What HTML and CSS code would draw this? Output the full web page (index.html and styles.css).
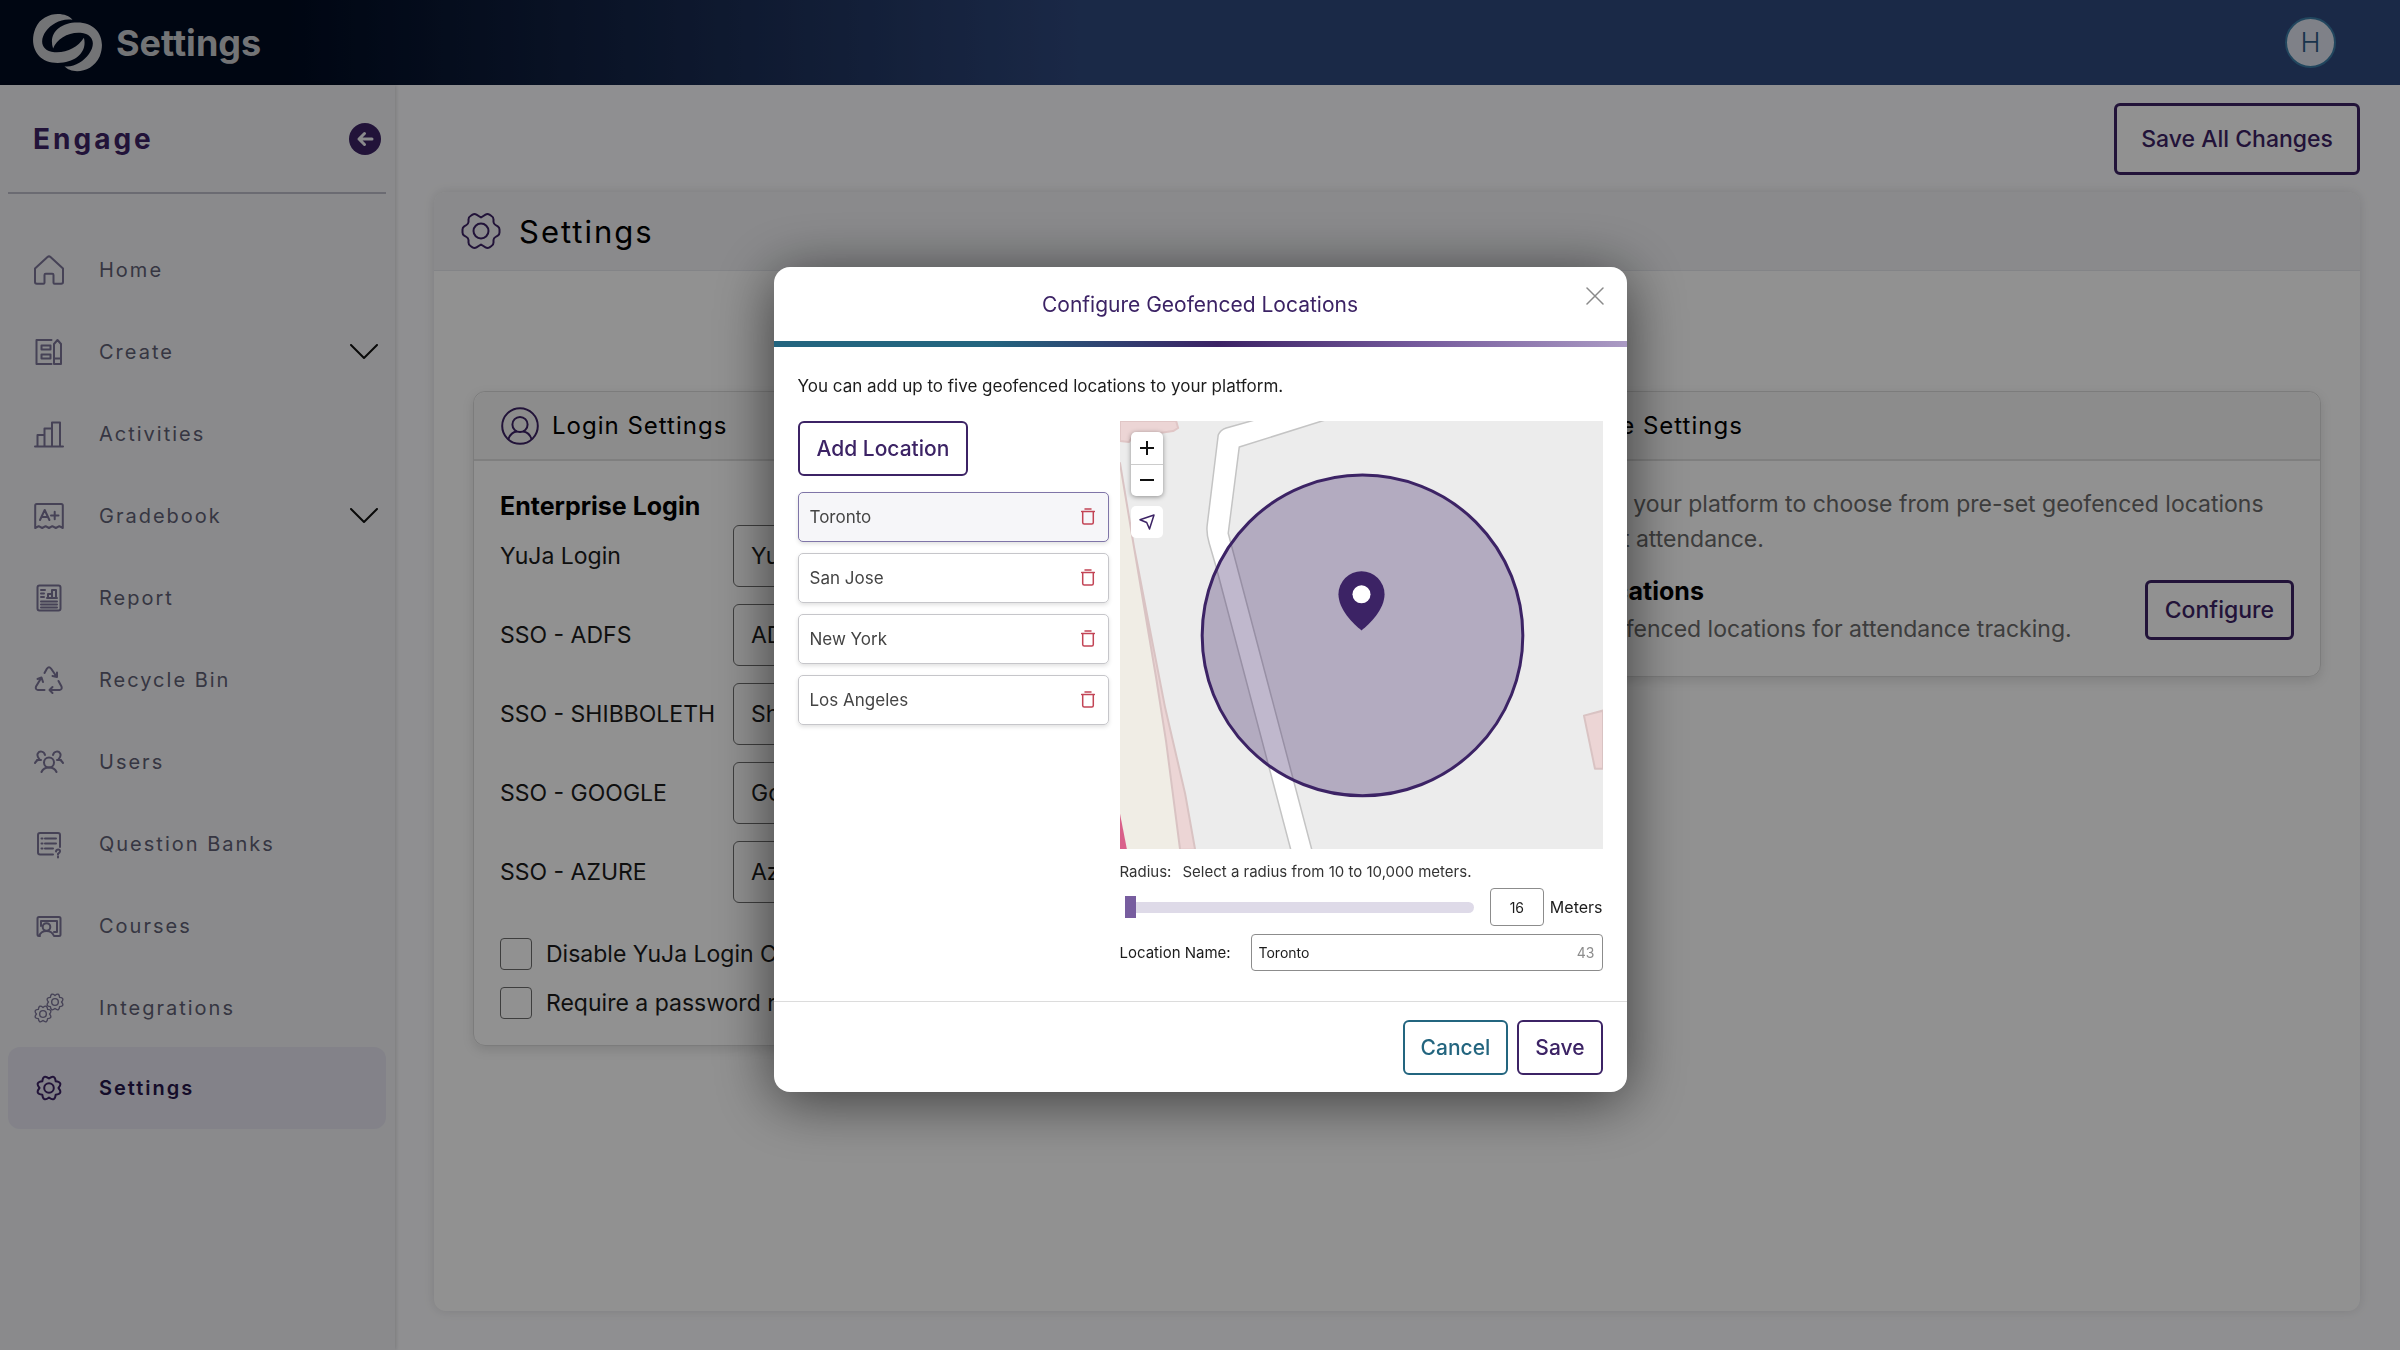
FILE: index.html
```html
<!DOCTYPE html>
<html lang="en">
<head>
  <meta charset="UTF-8">
  <meta name="viewport" content="width=device-width, initial-scale=1.0">
  <title>Engage - Settings</title>
  <link rel="stylesheet" href="styles.css">
</head>
<body>
  <!-- shared icons -->
  <svg class="sprite" aria-hidden="true">
    <symbol id="cog" viewBox="-13 -13 26 26">
      <path d="M0-9.500Q5.900-14.300 6.700-6.700Q14.300-5.900 9.500 0Q14.300 5.900 6.700 6.700Q5.900 14.300 0 9.500Q-5.900 14.300-6.700 6.700Q-14.300 5.900-9.500 0Q-14.300-5.900-6.700-6.700Q-5.900-14.300 0-9.500Z"/>
      <circle r="4.800"/>
    </symbol>
    <symbol id="person" viewBox="0 0 38 38">
      <circle cx="19" cy="19" r="17.800"/>
      <circle cx="19" cy="17.500" r="7.600"/>
      <path d="M7.500 32C9 27.500 12.500 25 15.500 24.500M30.500 32C29 27.500 25.500 25 22.500 24.500"/>
    </symbol>
    <symbol id="trash" viewBox="0 0 14 17">
      <path d="M.5 3.500h13M4 1h6M1.700 3.500v11q0 1.500 1.500 1.500h7.600q1.500 0 1.500-1.500v-11"/>
    </symbol>
    <symbol id="chevron" viewBox="0 0 28 16">
      <path d="M1 1l13 13L27 1"/>
    </symbol>
  </svg>

  <header class="topbar">
    <a class="brand" href="#">
      <svg class="logo" viewBox="98 34 212 176" aria-hidden="true">
        <path d="M219 54C198 28 130 28 108 80C88 130 112 183 175 183C228 183 264 150 253 108C236 136 200 154 165 151C124 147 120 115 140 88C156 66 185 49 219 54Z"/>
        <path d="M195 193C215 217 278 214 300 164C320 114 296 62 233 62C180 62 146 96 161 140C172 110 208 90 243 93C284 97 288 129 268 156C252 178 223 197 195 193Z"/>
      </svg>
      <span>Settings</span>
    </a>
    <button class="avatar" aria-label="Account">H</button>
  </header>

  <div class="layout">
    <aside class="sidebar">
      <div class="sidebar-head">
        <h2>Engage</h2>
        <button class="collapse" aria-label="Collapse menu">
          <svg viewBox="0 0 32 32"><path d="M23 16H10M15.500 10.500L10 16l5.500 5.500"/></svg>
        </button>
      </div>
      <nav class="menu">
        <a href="#"><svg class="icon" viewBox="0 0 30 30"><path d="M1 13.500L13.500 2q1.500-1.200 3 0L29 13.500V27q0 1.800-1.800 1.800h-6.700q-1 0-1-1V20q0-1.200-1.200-1.200h-6.600q-1.200 0-1.200 1.200v7.800q0 1-1 1H2.800Q1 28.800 1 27z"/></svg><span>Home</span></a>
        <a href="#"><svg class="icon" viewBox="0 0 30 30"><path d="M17.500 3H2.500v24h15M7.500 8.500h9v4h-9zM7.500 17.500h9v4h-9zM20 27V7l3.500-4L27 7v20zM20 21.500h7"/></svg><span>Create</span><svg class="chevron"><use href="#chevron"/></svg></a>
        <a href="#"><svg class="icon" viewBox="0 0 30 30"><path d="M1 27.500h28M3.500 27.500V16h7v11.500M10.500 27.500V9.500H18v18M18 27.500V3.500h8v24"/></svg><span>Activities</span></a>
        <a href="#"><svg class="icon" viewBox="0 0 30 30"><path d="M1.200 27V4.500q0-1.500 1.500-1.500h24.600q1.500 0 1.500 1.500V27l-3.500-1.800-3.500 1.800-3.500-1.800-3.300 1.800-3.400-1.800L8.200 27l-3.500-1.800zM6 19l4.700-10 4.700 10M7.800 16h5.800M17 14.500h7.500M20.700 10.700v7.600"/></svg><span>Gradebook</span><svg class="chevron"><use href="#chevron"/></svg></a>
        <a href="#"><svg class="icon" viewBox="0 0 30 30"><rect x="3.500" y="2.500" width="23" height="25" rx="2"/><path d="M7 7h4M7 10.500h3M7 14h3M7 18.500h16M7 21.500h16M7 24.500h16M13 15h10M14 15v-4h4v4M18 15V7h4v8"/></svg><span>Report</span></a>
        <a href="#"><svg class="icon" viewBox="0 0 30 30"><path d="M10.500 8L13 3.500q2-2.500 4 0l5.500 8M23 7.500v4.500l-4.500-1M24.500 16l3 5.500q1 3-2 3.500H15.500M18.500 22l-3 3 3 3M10.500 25H4q-3-.5-2-3.500L7.500 12.500M3.500 14l4-1.500L9 17"/></svg><span>Recycle Bin</span></a>
        <a href="#"><svg class="icon" viewBox="0 0 30 30"><circle cx="15" cy="15.500" r="5"/><path d="M7.500 25q2-4.500 7.500-4.500t7.500 4.500M1 16q1.500-3 4.500-3.500Q2.500 9 3.800 6.500C5.500 3.500 10 4 11 8M7 13H3M29 16q-1.500-3-4.500-3.500Q27.500 9 26.200 6.500C24.500 3.500 20 4 19 8M23 13h4"/></svg><span>Users</span></a>
        <a href="#"><svg class="icon" viewBox="0 0 30 30"><path d="M19 25.500H6q-2 0-2-2V6q0-2 2-2h18q2 0 2 2v12M11 9.500h11M11 14.500h11M11 19.500h8M7.500 9.500h1M7.500 14.500h1M7.500 19.500h1M22 22.500q.3-2 2.200-2t1.800 2q0 1-2 2.300v.8M24 27.500v1"/></svg><span>Question Banks</span></a>
        <a href="#"><svg class="icon" viewBox="0 0 30 30"><path d="M6 25H5q-1.500 0-1.500-1.500v-16Q3.500 6 5 6h20q1.500 0 1.500 1.500v16Q26.500 25 25 25h-5q-2-5-7.500-5T5 25M7 15v-5h16v11h-3"/><circle cx="12.500" cy="16" r="3.800"/></svg><span>Courses</span></a>
        <a href="#"><svg class="icon" viewBox="0 0 30 30"><use href="#cog" x="12" y="0" width="18" height="18"/><use href="#cog" x="0" y="12" width="18" height="18"/></svg><span>Integrations</span></a>
        <a href="#" class="active" aria-current="page"><svg class="icon" viewBox="0 0 30 30"><use href="#cog" x="2" y="2" width="26" height="26"/></svg><span>Settings</span></a>
      </nav>
    </aside>

    <main class="content">
      <div class="toolbar">
        <button class="btn btn-large">Save All Changes</button>
      </div>

      <section class="panel">
        <div class="panel-head">
          <svg class="panel-icon" viewBox="-20 -20 40 40" aria-hidden="true">
            <path d="M0-13.500L4.500-16.300Q6.500-17.500 8.500-16.300L10.500-15Q12.500-13.800 12.500-11.500V-9Q12.700-7 14.500-6L16.800-4.700Q18.500-3.600 18.500-1.500V1.500Q18.500 3.600 16.800 4.700L14.500 6Q12.700 7 12.500 9V11.500Q12.500 13.800 10.500 15L8.500 16.300Q6.500 17.500 4.500 16.300L0 13.500L-4.500 16.300Q-6.500 17.500-8.500 16.300L-10.500 15Q-12.500 13.800-12.500 11.500V9Q-12.700 7-14.500 6L-16.800 4.700Q-18.500 3.600-18.500 1.500V-1.500Q-18.500-3.600-16.800-4.700L-14.500-6Q-12.700-7-12.500-9V-11.500Q-12.500-13.800-10.500-15L-8.500-16.300Q-6.500-17.500-4.500-16.300Z"/>
            <circle r="7.500"/>
          </svg>
          <h1>Settings</h1>
        </div>

        <div class="cards">
          <section class="card">
            <div class="card-head">
              <svg class="card-icon" aria-hidden="true"><use href="#person"/></svg>
              <h2>Login Settings</h2>
            </div>
            <div class="card-body">
              <h3>Enterprise Login</h3>
              <div class="fields">
                <label for="yuja">YuJa Login</label>
                <input type="text" id="yuja" value="YuJa Login">
                <label for="adfs">SSO - ADFS</label>
                <input type="text" id="adfs" value="ADFS">
                <label for="shib">SSO - SHIBBOLETH</label>
                <input type="text" id="shib" value="Shibboleth">
                <label for="google">SSO - GOOGLE</label>
                <input type="text" id="google" value="Google">
                <label for="azure">SSO - AZURE</label>
                <input type="text" id="azure" value="Azure">
              </div>
              <div class="checks">
                <label><input type="checkbox"> Disable YuJa Login Credentials</label>
                <label><input type="checkbox"> Require a password reset</label>
              </div>
            </div>
          </section>

          <section class="card">
            <div class="card-head">
              <svg class="card-icon" aria-hidden="true"><use href="#person"/></svg>
              <h2>Attendance Settings</h2>
            </div>
            <div class="card-body">
              <p class="muted">Allow users from your platform to choose from pre-set geofenced locations when they report attendance.</p>
              <div class="setting">
                <div>
                  <h4>Geofenced Locations</h4>
                  <p class="muted">Update your geofenced locations for attendance tracking.</p>
                </div>
                <button class="btn">Configure</button>
              </div>
            </div>
          </section>
        </div>
      </section>
    </main>
  </div>

  <div class="overlay">
    <div class="modal" role="dialog" aria-modal="true" aria-labelledby="modalTitle">
      <div class="modal-head">
        <h2 id="modalTitle">Configure Geofenced Locations</h2>
        <button class="close" aria-label="Close">
          <svg viewBox="0 0 18 18"><path d="M1 1l16 16M17 1L1 17"/></svg>
        </button>
      </div>

      <div class="modal-body">
        <p class="intro">You can add up to five geofenced locations to your platform.</p>
        <div class="geo">
          <div class="places">
            <button class="btn btn-modal">Add Location</button>
            <ul>
              <li class="selected"><span>Toronto</span><button aria-label="Delete Toronto"><svg><use href="#trash"/></svg></button></li>
              <li><span>San Jose</span><button aria-label="Delete San Jose"><svg><use href="#trash"/></svg></button></li>
              <li><span>New York</span><button aria-label="Delete New York"><svg><use href="#trash"/></svg></button></li>
              <li><span>Los Angeles</span><button aria-label="Delete Los Angeles"><svg><use href="#trash"/></svg></button></li>
            </ul>
          </div>

          <div class="editor">
            <div class="map">
              <svg class="map-tiles" viewBox="0 0 482 428" role="img" aria-label="Map of Toronto">
                <rect width="482" height="428" fill="#ececec"/>
                <path d="M0 42L14 126 34 248 46 320 61 428H0Z" fill="#f0ede5"/>
                <path d="M0 42L14 126 31 214 45 286 65 372 75 428H60L46 320 36 256 14 126Z" fill="#ecd5d5" stroke="#d9c3c3"/>
                <path d="M0 392L7 428H0Z" fill="#d9608a"/>
                <path d="M0 0H56L58 7 53 10 12 16 9 21 0 20Z" fill="#ecd5d5" stroke="#e0c6c6"/>
                <path d="M482 289L463 294 474 347H482Z" fill="#ecd5d5" stroke="#d9c3c3"/>
                <path d="M138-2L106 7Q100 9 98 14L87 104Q86 112 89 122L96 146 171 430H192L108 112 119 26 208-2Z" fill="#fff" stroke="#c4c4c4" stroke-width="1.500"/>
                <circle cx="242" cy="214" r="160" fill="#3c2365" fill-opacity=".32" stroke="#3c2365" stroke-width="3"/>
                <path d="M241 209C233 203 218 188 218 173A23 23 0 0 1 264 173C264 188 249 203 241 209Z" fill="#3c2365"/>
                <circle cx="241" cy="173" r="9" fill="#fff"/>
              </svg>
              <div class="map-controls">
                <div class="zoom">
                  <button aria-label="Zoom in"><svg viewBox="0 0 14 14"><path d="M7 .5v13M.5 7h13"/></svg></button>
                  <button aria-label="Zoom out"><svg viewBox="0 0 14 14"><path d="M.5 7h13"/></svg></button>
                </div>
                <button class="locate" aria-label="My location"><svg viewBox="0 0 16 16"><path d="M1 5.700L15 1l-4.500 14-2.800-6.500z"/></svg></button>
              </div>
            </div>

            <div class="radius-text">
              <label for="radius">Radius:</label>
              <span>Select a radius from 10 to 10,000 meters.</span>
            </div>
            <div class="radius-row">
              <input type="range" id="radius" min="10" max="10000" value="16">
              <input type="text" id="meters" value="16">
              <label for="meters">Meters</label>
            </div>
            <div class="name-row">
              <label for="locationName">Location Name:</label>
              <div class="name-field">
                <input type="text" id="locationName" value="Toronto">
                <span>43</span>
              </div>
            </div>
          </div>
        </div>
      </div>

      <div class="modal-foot">
        <button class="btn btn-modal btn-cancel">Cancel</button>
        <button class="btn btn-modal">Save</button>
      </div>
    </div>
  </div>
</body>
</html>
```

FILE: styles.css
```css
* {
  box-sizing: border-box;
}
body {
  display: flex;
  flex-direction: column;
  min-height: 100vh;
  margin: 0;
  font-family: Inter, "Liberation Sans", sans-serif;
  font-size: 23px;
  color: #1c1c1c;
  background: #fcfcff;
}
h1, h2, h3, h4, p, ul {
  margin: 0;
  padding: 0;
}
button, input {
  font: inherit;
  color: inherit;
}
button {
  padding: 0;
  border: none;
  background: none;
  cursor: pointer;
}
a {
  color: inherit;
  text-decoration: none;
}
svg {
  display: block;
  fill: none;
  stroke: currentColor;
  stroke-width: 2;
  stroke-linecap: round;
  stroke-linejoin: round;
}
.sprite {
  position: absolute;
  width: 0;
  height: 0;
}

/* top bar */
.topbar {
  display: flex;
  align-items: center;
  justify-content: space-between;
  height: 85px;
  padding: 0 64px 0 32px;
  background: linear-gradient(90deg, #000b21 12%, #2f487d 45%);
}
.brand {
  display: flex;
  align-items: center;
  gap: 13px;
  font-size: 36px;
  font-weight: 700;
  color: #cbccd0;
}
.logo {
  width: 71px;
  height: 59px;
  fill: currentColor;
  stroke: none;
}
.avatar {
  width: 51px;
  height: 51px;
  border: 2px solid #3a7ba6;
  border-radius: 50%;
  background: #dfe3f0;
  color: #2d5a86;
  font-size: 27px;
  font-weight: 300;
}

/* sidebar */
.layout {
  display: flex;
  flex: 1;
}
.sidebar {
  width: 395px;
  flex-shrink: 0;
  padding: 0 9px 0 8px;
  background: #f2f3f6;
  box-shadow: 1px 0 4px rgba(0, 0, 0, 0.15);
}
.sidebar-head {
  display: flex;
  align-items: center;
  justify-content: space-between;
  height: 109px;
  padding: 0 5px 0 25px;
  border-bottom: 2px solid #bcbdc8;
  color: #3c2365;
}
.sidebar-head h2 {
  font-size: 28px;
  font-weight: 700;
  letter-spacing: 3px;
}
.collapse {
  width: 32px;
  height: 32px;
  border-radius: 50%;
  background: #3c2365;
  color: #f2f3f6;
}
.collapse svg {
  stroke-width: 3;
}
.menu {
  padding-top: 35px;
}
.menu a {
  display: flex;
  align-items: center;
  height: 82px;
  padding: 0 8px 0 26px;
  border-radius: 12px;
  font-size: 20px;
  letter-spacing: 2px;
  color: #605f74;
}
.menu .icon {
  width: 30px;
  height: 30px;
  margin-right: 35px;
  color: #7b7498;
}
.menu span {
  flex: 1;
}
.menu .chevron {
  width: 28px;
  height: 16px;
  color: #111;
}
.menu .active {
  margin-top: -2px;
  background: #e6e5f1;
  color: #26164a;
  font-weight: 600;
}
.menu .active .icon {
  color: #3c2365;
}

/* main area */
.content {
  display: flex;
  flex-direction: column;
  flex: 1;
  padding: 18px 40px 39px 39px;
}
.toolbar {
  display: flex;
  justify-content: flex-end;
  margin-bottom: 17px;
}
.btn {
  height: 60px;
  padding: 0 17px;
  border: 3px solid #3c2365;
  border-radius: 6px;
  background: #fff;
  color: #3c2365;
  font-weight: 500;
}
.btn-large {
  height: 72px;
  padding: 0 24px;
}
.panel {
  flex: 1;
  border-radius: 12px;
  background: #fff;
  box-shadow: 0 0 12px rgba(0, 0, 0, 0.12);
}
.panel-head {
  display: flex;
  align-items: center;
  gap: 18px;
  height: 79px;
  padding: 0 27px;
  border-bottom: 1px solid #e6e8ee;
  border-radius: 12px 12px 0 0;
  background: #f2f3f6;
}
.panel-head h1 {
  font-size: 31px;
  font-weight: 400;
  letter-spacing: 2px;
  color: #000;
}
.panel-icon {
  width: 40px;
  height: 40px;
  color: #3c2365;
}
.cards {
  display: grid;
  grid-template-columns: 1fr 1fr;
  align-items: start;
  gap: 40px;
  padding: 120px 39px 40px;
}
.card {
  border: 1px solid #dadada;
  border-radius: 12px;
  box-shadow: 0 4px 12px rgba(0, 0, 0, 0.12);
}
.card-head {
  display: flex;
  align-items: center;
  gap: 13px;
  height: 69px;
  padding: 0 27px;
  border-bottom: 2px solid #dfdfdf;
  border-radius: 12px 12px 0 0;
  background: #f7f7f7;
}
.card-head h2 {
  font-size: 24px;
  font-weight: 400;
  letter-spacing: 1px;
  color: #000;
}
.card-icon {
  width: 38px;
  height: 38px;
  color: #3c2365;
}
.card-body {
  padding: 26px;
}
.card h3, .card h4 {
  font-size: 25px;
  font-weight: 700;
  line-height: 38px;
  color: #000;
}
.card h4 {
  margin-bottom: 3px;
  line-height: 36px;
}
.fields {
  display: grid;
  grid-template-columns: 233px 1fr;
  align-items: center;
  row-gap: 17px;
}
.fields input {
  height: 62px;
  padding: 0 17px;
  border: 1px solid #6e6e6e;
  border-radius: 6px;
  background: #fff;
}
.checks {
  display: grid;
  gap: 17px;
  margin-top: 35px;
}
.checks label {
  display: flex;
  align-items: center;
  gap: 14px;
  height: 32px;
}
.checks input {
  appearance: none;
  width: 32px;
  height: 32px;
  margin: 0;
  border: 1px solid #6e6e6e;
  border-radius: 4px;
}
.muted {
  line-height: 35px;
  color: #6b6b6b;
}
.setting {
  display: flex;
  align-items: center;
  justify-content: space-between;
  margin: 16px 0 3px;
}

/* modal */
.overlay {
  position: fixed;
  inset: 0;
  display: flex;
  align-items: center;
  justify-content: center;
  padding-top: 9px;
  background: rgba(0, 0, 0, 0.43);
}
.modal {
  width: 853px;
  border-radius: 16px;
  background: #fff;
  box-shadow: 0 8px 60px rgba(0, 0, 0, 0.6);
}
.modal-head {
  position: relative;
  padding: 25px 0 24px;
  border-bottom: 6px solid;
  border-image: linear-gradient(90deg, #23657f 25%, #3c2365 52%, #74599b 75%, #ab9bc4) 1;
}
.modal-head h2 {
  font-size: 21px;
  font-weight: 400;
  line-height: 25px;
  text-align: center;
  color: #3c2365;
}
.close {
  position: absolute;
  top: 20px;
  right: 23px;
  width: 18px;
  height: 18px;
  color: #8a8a8a;
}
.close svg {
  stroke-width: 1.5;
}
.modal-body {
  padding: 26px 24px 30px;
}
.intro {
  margin-bottom: 22px;
  font-size: 17px;
  line-height: 26px;
}
.geo {
  display: grid;
  grid-template-columns: 311px 1fr;
  gap: 11px;
}
.btn-modal {
  height: 55px;
  padding: 0 17px;
  border-width: 2px;
  font-size: 21px;
}
.places ul {
  display: grid;
  gap: 11px;
  margin-top: 16px;
  list-style: none;
}
.places li {
  display: flex;
  align-items: center;
  justify-content: space-between;
  height: 50px;
  padding: 0 13px 0 11px;
  border: 1px solid #c6c6ca;
  border-radius: 5px;
  font-size: 17px;
  color: #444;
  box-shadow: 0 2px 4px rgba(0, 0, 0, 0.12);
}
.places li.selected {
  border-color: #7f75a8;
  background: #f6f6f9;
}
.places svg {
  width: 14px;
  height: 17px;
  color: #c24455;
  stroke-width: 1.5;
}
.map {
  position: relative;
}
.map-tiles {
  width: 100%;
  stroke: none;
}
.map-controls {
  position: absolute;
  top: 11px;
  left: 11px;
  display: grid;
  gap: 10px;
}
.zoom {
  border-radius: 5px;
  background: #fff;
  box-shadow: 0 1px 5px rgba(0, 0, 0, 0.4);
}
.map-controls button {
  display: grid;
  place-items: center;
  width: 32px;
  height: 32px;
  color: #111;
}
.zoom button + button {
  border-top: 1px solid #ccc;
}
.map-controls svg {
  width: 14px;
  height: 14px;
}
.map-controls .locate {
  border-radius: 5px;
  background: #fff;
  color: #3c2365;
}
.map-controls .locate svg {
  width: 16px;
  height: 16px;
  stroke-width: 1.5;
}
.radius-text {
  display: flex;
  gap: 11px;
  padding: 13px 0 6px;
  font-size: 15px;
  line-height: 20px;
  color: #333;
}
.radius-row {
  display: flex;
  align-items: center;
  font-size: 16px;
}
.radius-row input[type="range"] {
  appearance: none;
  flex: 1;
  min-width: 0;
  height: 11px;
  margin: 0 16px 0 5px;
  border-radius: 6px;
  background: #dedae8;
}
.radius-row input[type="range"]::-webkit-slider-thumb {
  appearance: none;
  width: 11px;
  height: 22px;
  background: #775d9f;
}
.radius-row input[type="text"] {
  width: 54px;
  height: 38px;
  margin-right: 6px;
  padding: 0;
  border: 1px solid #8c8c8c;
  border-radius: 4px;
  font-size: 14px;
  text-align: center;
}
.name-row {
  display: flex;
  align-items: center;
  justify-content: space-between;
  margin-top: 8px;
  font-size: 15px;
}
.name-field {
  display: flex;
  align-items: center;
  width: 352px;
  height: 37px;
  padding: 0 7px;
  border: 1px solid #8c8c8c;
  border-radius: 4px;
}
.name-field input {
  flex: 1;
  min-width: 0;
  padding: 0;
  border: none;
  outline: none;
  font-size: 14px;
}
.name-field span {
  font-size: 14px;
  color: #8c8c8c;
}
.modal-foot {
  display: flex;
  justify-content: flex-end;
  gap: 9px;
  padding: 18px 24px 17px;
  border-top: 1px solid #dcdcdc;
}
.modal-foot .btn {
  padding: 0 16px;
}
.btn-cancel {
  border-color: #23657f;
  color: #23657f;
}
```
